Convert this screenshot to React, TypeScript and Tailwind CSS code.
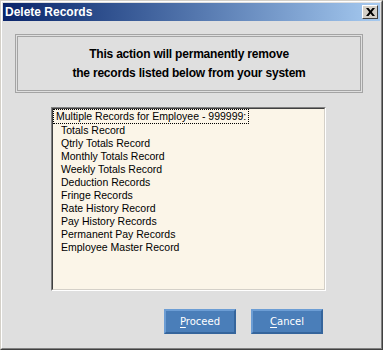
export default function App() {
  const records = [
    'Totals Record',
    'Qtrly Totals Record',
    'Monthly Totals Record',
    'Weekly Totals Record',
    'Deduction Records',
    'Fringe Records',
    'Rate History Record',
    'Pay History Records',
    'Permanent Pay Records',
    'Employee Master Record',
  ];

  return (
    <div className="w-[383px] h-[350px] border border-t-[#d4d0c8] border-l-[#d4d0c8] border-r-[#404040] border-b-[#404040]">
      <div className="w-full h-full border border-t-white border-l-white border-r-[#808080] border-b-[#808080] bg-[#dfdfdf] p-px flex flex-col">
        {/* title bar */}
        <div className="h-[18px] flex items-center justify-between pl-[2px] pr-[2px] bg-gradient-to-r from-[#0a246a] to-[#a6caf0]">
          <span className="text-white font-bold text-[12px] leading-none font-['Liberation_Sans',Arial,sans-serif]">
            Delete Records
          </span>
          <button
            aria-label="Close"
            className="w-[16px] h-[14px] bg-[#d4d0c8] border border-t-white border-l-white border-r-[#404040] border-b-[#404040] flex items-center justify-center"
          >
            <svg width="9" height="8" viewBox="0 0 9 8">
              <path d="M0 0h2.5l2 2.6L6.5 0H9L5.8 4 9 8H6.5l-2-2.6-2 2.6H0l3.2-4z" fill="#000" />
            </svg>
          </button>
        </div>

        {/* message box */}
        <div className="mt-[13px] ml-[12px] w-[348px] h-[59px] border-[3px] border-double border-[#a4a4a4] flex flex-col items-center justify-center">
          <p className="text-[12px] leading-[19px] font-bold text-black text-center font-['Liberation_Sans',Arial,sans-serif] tracking-[-0.2px]">
            This action will permanently remove
            <br />
            the records listed below from your system
          </p>
        </div>

        {/* list */}
        <div className="mt-[14px] ml-[48px] w-[275px] h-[184px] border border-t-[#808080] border-l-[#808080] border-r-white border-b-white">
          <div className="w-full h-full border border-t-[#404040] border-l-[#404040] border-r-[#d4d0c8] border-b-[#d4d0c8] bg-[#fbf5e8] font-['Liberation_Sans',Arial,sans-serif] text-[10.5px] leading-[13px] text-black">
            <div className="px-[2px] border border-dotted border-black w-fit">
              Multiple Records for Employee - 999999:
            </div>
            {records.map((r) => (
              <div key={r} className="pl-[8px]">
                {r}
              </div>
            ))}
          </div>
        </div>

        {/* buttons */}
        <div className="mt-[18px] ml-[161px] flex gap-[15px]">
          <button className="w-[72px] h-[25px] bg-[#4a7eb9] border-2 border-t-[#6c9dd4] border-l-[#6c9dd4] border-r-[#35659c] border-b-[#35659c] text-white text-[10px] font-['DejaVu_Sans',sans-serif]">
            <span className="underline underline-offset-2">P</span>roceed
          </button>
          <button className="w-[72px] h-[25px] bg-[#4a7eb9] border-2 border-t-[#6c9dd4] border-l-[#6c9dd4] border-r-[#35659c] border-b-[#35659c] text-white text-[10px] font-['DejaVu_Sans',sans-serif]">
            <span className="underline underline-offset-2">C</span>ancel
          </button>
        </div>
      </div>
    </div>
  );
}
